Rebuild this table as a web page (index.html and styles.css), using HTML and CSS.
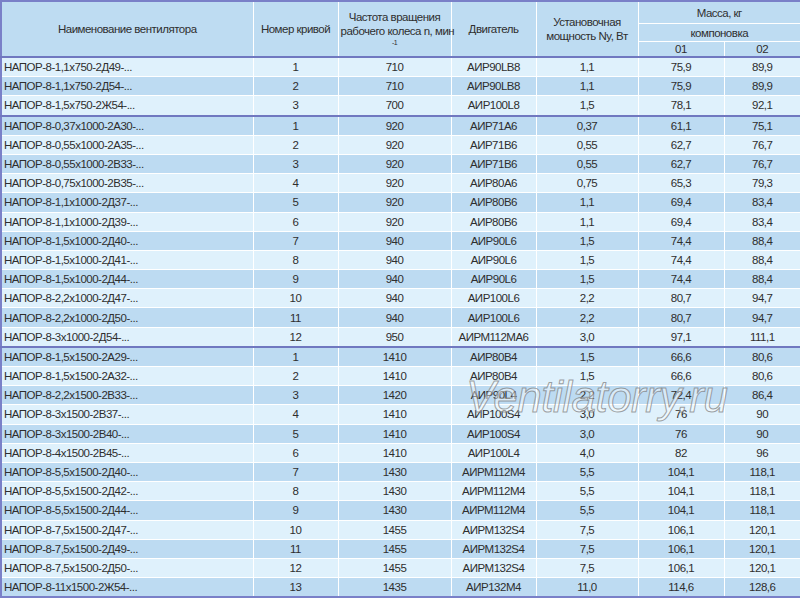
FILE: index.html
```html
<!DOCTYPE html>
<html lang="ru">
<head>
<meta charset="utf-8">
<title>НАПОР-8</title>
<link rel="stylesheet" href="styles.css">
</head>
<body>
<div class="wrap">
<table class="fans">
<colgroup>
<col class="c-name"><col class="c-curve"><col class="c-freq"><col class="c-eng"><col class="c-pow"><col class="c-m1"><col class="c-m2">
</colgroup>
<thead>
<tr class="h1">
<th rowspan="3">Наименование вентилятора</th>
<th rowspan="3">Номер кривой</th>
<th rowspan="3" class="freq">Частота вращения<br>рабочего колеса n, мин<br><span class="sup">-1</span></th>
<th rowspan="3">Двигатель</th>
<th rowspan="3">Установочная<br>мощность Ny, Вт</th>
<th colspan="2">Масса, кг</th>
</tr>
<tr class="h2"><th colspan="2">компоновка</th></tr>
<tr class="h3"><th>01</th><th>02</th></tr>
</thead>
<tbody>
<tr class="grp"><td>НАПОР-8-1,1x750-2Д49-...</td><td>1</td><td>710</td><td>АИР90LB8</td><td>1,1</td><td>75,9</td><td>89,9</td></tr>
<tr><td>НАПОР-8-1,1x750-2Д54-...</td><td>2</td><td>710</td><td>АИР90LB8</td><td>1,1</td><td>75,9</td><td>89,9</td></tr>
<tr><td>НАПОР-8-1,5x750-2Ж54-...</td><td>3</td><td>700</td><td>АИР100L8</td><td>1,5</td><td>78,1</td><td>92,1</td></tr>
<tr class="grp"><td>НАПОР-8-0,37x1000-2А30-...</td><td>1</td><td>920</td><td>АИР71А6</td><td>0,37</td><td>61,1</td><td>75,1</td></tr>
<tr><td>НАПОР-8-0,55x1000-2А35-...</td><td>2</td><td>920</td><td>АИР71В6</td><td>0,55</td><td>62,7</td><td>76,7</td></tr>
<tr><td>НАПОР-8-0,55x1000-2В33-...</td><td>3</td><td>920</td><td>АИР71В6</td><td>0,55</td><td>62,7</td><td>76,7</td></tr>
<tr><td>НАПОР-8-0,75x1000-2В35-...</td><td>4</td><td>920</td><td>АИР80А6</td><td>0,75</td><td>65,3</td><td>79,3</td></tr>
<tr><td>НАПОР-8-1,1x1000-2Д37-...</td><td>5</td><td>920</td><td>АИР80В6</td><td>1,1</td><td>69,4</td><td>83,4</td></tr>
<tr><td>НАПОР-8-1,1x1000-2Д39-...</td><td>6</td><td>920</td><td>АИР80В6</td><td>1,1</td><td>69,4</td><td>83,4</td></tr>
<tr><td>НАПОР-8-1,5x1000-2Д40-...</td><td>7</td><td>940</td><td>АИР90L6</td><td>1,5</td><td>74,4</td><td>88,4</td></tr>
<tr><td>НАПОР-8-1,5x1000-2Д41-...</td><td>8</td><td>940</td><td>АИР90L6</td><td>1,5</td><td>74,4</td><td>88,4</td></tr>
<tr><td>НАПОР-8-1,5x1000-2Д44-...</td><td>9</td><td>940</td><td>АИР90L6</td><td>1,5</td><td>74,4</td><td>88,4</td></tr>
<tr><td>НАПОР-8-2,2x1000-2Д47-...</td><td>10</td><td>940</td><td>АИР100L6</td><td>2,2</td><td>80,7</td><td>94,7</td></tr>
<tr><td>НАПОР-8-2,2x1000-2Д50-...</td><td>11</td><td>940</td><td>АИР100L6</td><td>2,2</td><td>80,7</td><td>94,7</td></tr>
<tr><td>НАПОР-8-3x1000-2Д54-...</td><td>12</td><td>950</td><td>АИРМ112МА6</td><td>3,0</td><td>97,1</td><td>111,1</td></tr>
<tr class="grp"><td>НАПОР-8-1,5x1500-2А29-...</td><td>1</td><td>1410</td><td>АИР80В4</td><td>1,5</td><td>66,6</td><td>80,6</td></tr>
<tr><td>НАПОР-8-1,5x1500-2А32-...</td><td>2</td><td>1410</td><td>АИР80В4</td><td>1,5</td><td>66,6</td><td>80,6</td></tr>
<tr><td>НАПОР-8-2,2x1500-2В33-...</td><td>3</td><td>1420</td><td>АИР90L4</td><td>2,2</td><td>72,4</td><td>86,4</td></tr>
<tr><td>НАПОР-8-3x1500-2В37-...</td><td>4</td><td>1410</td><td>АИР100S4</td><td>3,0</td><td>76</td><td>90</td></tr>
<tr><td>НАПОР-8-3x1500-2В40-...</td><td>5</td><td>1410</td><td>АИР100S4</td><td>3,0</td><td>76</td><td>90</td></tr>
<tr><td>НАПОР-8-4x1500-2В45-...</td><td>6</td><td>1410</td><td>АИР100L4</td><td>4,0</td><td>82</td><td>96</td></tr>
<tr><td>НАПОР-8-5,5x1500-2Д40-...</td><td>7</td><td>1430</td><td>АИРМ112М4</td><td>5,5</td><td>104,1</td><td>118,1</td></tr>
<tr><td>НАПОР-8-5,5x1500-2Д42-...</td><td>8</td><td>1430</td><td>АИРМ112М4</td><td>5,5</td><td>104,1</td><td>118,1</td></tr>
<tr><td>НАПОР-8-5,5x1500-2Д44-...</td><td>9</td><td>1430</td><td>АИРМ112М4</td><td>5,5</td><td>104,1</td><td>118,1</td></tr>
<tr><td>НАПОР-8-7,5x1500-2Д47-...</td><td>10</td><td>1455</td><td>АИРМ132S4</td><td>7,5</td><td>106,1</td><td>120,1</td></tr>
<tr><td>НАПОР-8-7,5x1500-2Д49-...</td><td>11</td><td>1455</td><td>АИРМ132S4</td><td>7,5</td><td>106,1</td><td>120,1</td></tr>
<tr><td>НАПОР-8-7,5x1500-2Д50-...</td><td>12</td><td>1455</td><td>АИРМ132S4</td><td>7,5</td><td>106,1</td><td>120,1</td></tr>
<tr><td>НАПОР-8-11x1500-2Ж54-...</td><td>13</td><td>1435</td><td>АИР132М4</td><td>11,0</td><td>114,6</td><td>128,6</td></tr>
</tbody>
</table>
<div class="watermark">Ventilatorry.ru</div>
</div>
</body>
</html>
```
FILE: styles.css
```css
html, body {
  margin: 0;
  padding: 0;
  background: #ffffff;
}
body {
  font-family: "Liberation Sans", Arial, sans-serif;
  color: #2e2e2e;
}
.wrap {
  position: relative;
  width: 800px;
  height: 598px;
  overflow: hidden;
}
.fans {
  width: 800px;
  border-collapse: collapse;
  table-layout: fixed;
  border: 2px solid #7a80c8;
  font-size: 11.5px;
  letter-spacing: -0.5px;
}
.c-name { width: 252px; }
.c-curve { width: 85px; }
.c-freq { width: 113px; }
.c-eng { width: 85px; }
.c-pow { width: 102px; }
.c-m1 { width: 86px; }
.c-m2 { width: 77px; }

.fans th {
  background: #bedcf2;
  font-weight: normal;
  border: 1px solid #ffffff;
  padding: 0 2px;
  line-height: 14px;
  vertical-align: middle;
  color: #2e2e2e;
  white-space: nowrap;
}
.fans .h1 th { height: 21px; }
.fans .h2 th { height: 17px; }
.fans .h3 th { height: 14px; }
.fans .freq {
  vertical-align: top;
  padding-top: 8px;
}
.fans .sup {
  font-size: 7px;
  line-height: 8px;
  display: inline-block;
  vertical-align: top;
  padding-top: 1px;
}
.fans td {
  border: 1px solid #ffffff;
  height: 18.2px;
  padding: 0 2px;
  text-align: center;
  line-height: 14px;
  white-space: nowrap;
  vertical-align: middle;
}
.fans td:first-child {
  text-align: left;
  padding-left: 2px;
}
.fans tbody tr:nth-child(odd) td { background: #dff1fc; }
.fans tbody tr:nth-child(even) td { background: #bddbf2; }
.fans tbody tr.grp td { border-top: 2px solid #7078c0; }

.watermark {
  position: absolute;
  left: 466px;
  top: 374px;
  font-family: "Liberation Sans", Arial, sans-serif;
  font-style: italic;
  font-size: 44px;
  line-height: 46px;
  letter-spacing: -0.5px;
  color: rgba(255, 255, 255, 0.45);
  -webkit-text-stroke: 1px rgba(120, 120, 120, 0.7);
  pointer-events: none;
  white-space: nowrap;
}
```
